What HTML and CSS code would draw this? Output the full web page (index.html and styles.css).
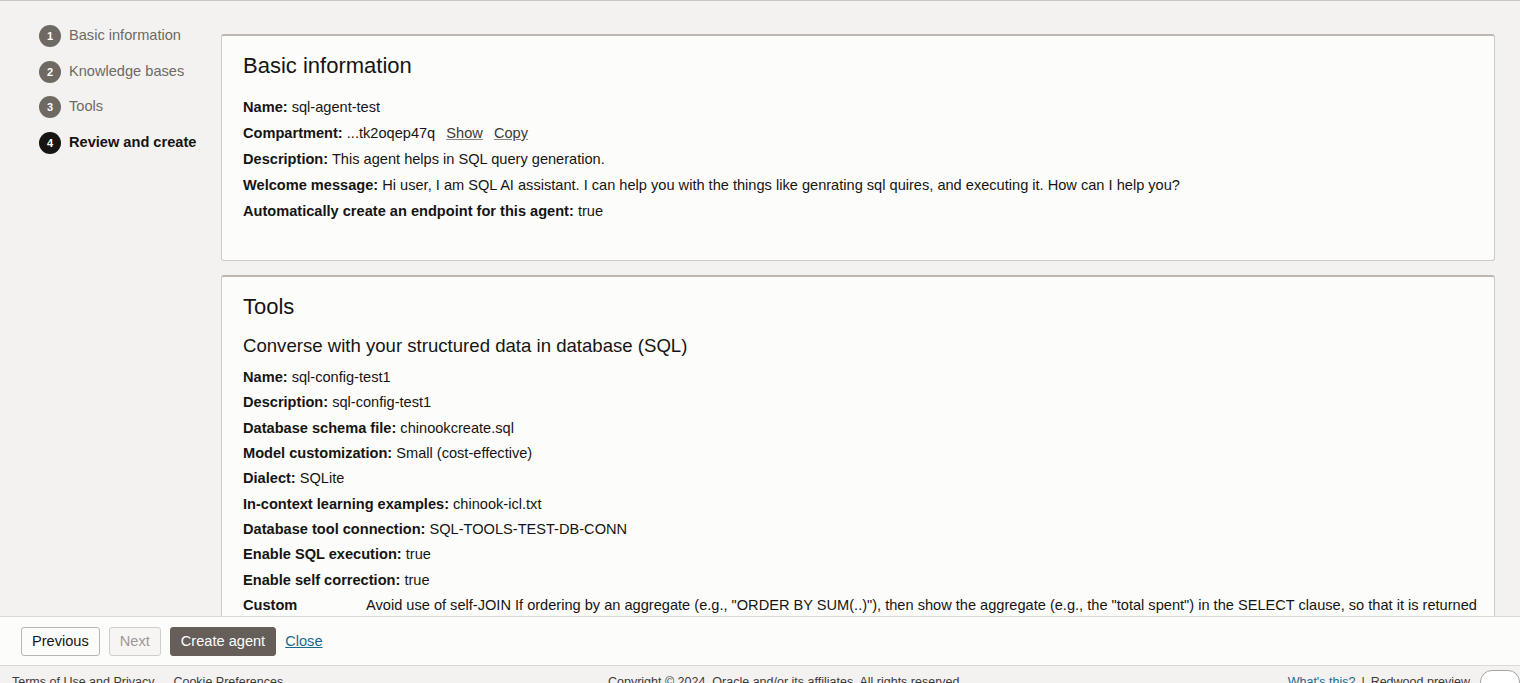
FILE: index.html
```html
<!DOCTYPE html>
<html lang="en">
<head>
<meta charset="utf-8">
<title>Review and create</title>
<link rel="stylesheet" href="styles.css">
</head>
<body>
<div class="page">
  <div class="main">
    <nav class="steps">
      <div class="step"><span class="num">1</span><span class="label">Basic information</span></div>
      <div class="step"><span class="num">2</span><span class="label">Knowledge bases</span></div>
      <div class="step"><span class="num">3</span><span class="label">Tools</span></div>
      <div class="step active"><span class="num">4</span><span class="label">Review and create</span></div>
    </nav>
    <div class="content">
      <section class="card card-basic">
        <h2 class="card-title">Basic information</h2>
        <div class="kv"><b>Name:</b> sql-agent-test</div>
        <div class="kv"><b>Compartment:</b> ...tk2oqep47q <a class="ulink" href="#">Show</a> <a class="ulink" href="#">Copy</a></div>
        <div class="kv"><b>Description:</b> This agent helps in SQL query generation.</div>
        <div class="kv"><b>Welcome message:</b> Hi user, I am SQL AI assistant. I can help you with the things like genrating sql quires, and executing it. How can I help you?</div>
        <div class="kv"><b>Automatically create an endpoint for this agent:</b> true</div>
      </section>
      <section class="card card-tools">
        <h2 class="card-title">Tools</h2>
        <h3 class="sub-title">Converse with your structured data in database (SQL)</h3>
        <div class="kv"><b>Name:</b> sql-config-test1</div>
        <div class="kv"><b>Description:</b> sql-config-test1</div>
        <div class="kv"><b>Database schema file:</b> chinookcreate.sql</div>
        <div class="kv"><b>Model customization:</b> Small (cost-effective)</div>
        <div class="kv"><b>Dialect:</b> SQLite</div>
        <div class="kv"><b>In-context learning examples:</b> chinook-icl.txt</div>
        <div class="kv"><b>Database tool connection:</b> SQL-TOOLS-TEST-DB-CONN</div>
        <div class="kv"><b>Enable SQL execution:</b> true</div>
        <div class="kv"><b>Enable self correction:</b> true</div>
        <div class="kv custom"><b>Custom</b><span>Avoid use of self-JOIN If ordering by an aggregate (e.g., "ORDER BY SUM(..)"), then show the aggregate (e.g., the "total spent") in the SELECT clause, so that it is returned in the result set and can be verified by the user.</span></div>
      </section>
    </div>
  </div>
  <div class="actions">
    <button class="btn">Previous</button>
    <button class="btn disabled">Next</button>
    <button class="btn primary">Create agent</button>
    <a class="close" href="#">Close</a>
  </div>
  <footer class="footer">
    <div class="f-left"><a href="#">Terms of Use and Privacy</a><a href="#">Cookie Preferences</a></div>
    <div class="f-center">Copyright © 2024, Oracle and/or its affiliates. All rights reserved.</div>
    <div class="f-right"><a class="blue" href="#">What's this?</a><span class="sep">|</span><span>Redwood preview</span><span class="toggle"></span></div>
  </footer>
</div>
</body>
</html>
```

FILE: styles.css
```css
* { box-sizing: border-box; }
html, body { margin: 0; padding: 0; }
body {
  font-family: "Liberation Sans", Arial, sans-serif;
  color: #161513;
  background: #f3f2f1;
  overflow: hidden;
}
.page {
  width: 1520px;
  height: 683px;
  display: flex;
  flex-direction: column;
  border-top: 1px solid #c9c5c1;
  overflow: hidden;
}
.main {
  height: 615px;
  flex: none;
  display: flex;
  overflow: hidden;
}
.steps {
  width: 221px;
  flex: none;
  padding: 24px 0 0 39px;
}
.step {
  display: flex;
  align-items: center;
  height: 22px;
  margin-bottom: 13.7px;
}
.num {
  width: 22px;
  height: 22px;
  border-radius: 50%;
  background: #6f6964;
  color: #fff;
  font-size: 11px;
  font-weight: bold;
  display: flex;
  align-items: center;
  justify-content: center;
  flex: none;
}
.label {
  margin-left: 8px;
  font-size: 14.6px;
  color: #6f6964;
  position: relative;
  top: -1px;
}
.step.active .num { background: #161513; }
.step.active .label { color: #161513; font-weight: bold; }

.content {
  flex: 1;
  padding: 33px 25px 0 0;
  display: flex;
  flex-direction: column;
  gap: 14px;
}
.card {
  background: #fcfcfb;
  border: 1px solid #cdc9c5;
  border-top: 2px solid #bdb7b2;
  border-radius: 3px;
  padding: 15px 21px 0 21px;
  flex: none;
}
.card-basic { height: 227px; }
.card-tools { height: 400px; }
.card-title {
  margin: 0;
  font-size: 22px;
  font-weight: normal;
  line-height: 29px;
}
.sub-title {
  margin: 13px 0 7px;
  font-size: 18.6px;
  font-weight: normal;
  line-height: 24px;
}
.kv {
  font-size: 14.6px;
  line-height: 25.33px;
}
.card-basic .card-title { margin-bottom: 14px; }
.card-basic .kv { line-height: 26px; }
.kv b { font-weight: bold; }
.ulink {
  color: #3c3a37;
  text-decoration: underline;
  text-decoration-color: #8a847f;
  margin-left: 7px;
}
.kv.custom {
  display: grid;
  grid-template-columns: 123px 1fr;
  margin-right: -18px;
}

.actions {
  height: 50px;
  flex: none;
  background: #fcfcfb;
  border-top: 1px solid #dcd8d4;
  border-bottom: 1px solid #dcd8d4;
  display: flex;
  align-items: center;
  padding: 0 0 0 21px;
  gap: 9px;
}
.btn {
  font-family: "Liberation Sans", Arial, sans-serif;
  font-size: 14.6px;
  height: 29px;
  padding: 0 10px;
  background: #fcfcfb;
  border: 1px solid #bcb6b1;
  border-radius: 3px;
  color: #161513;
}
.btn.disabled {
  color: #9e9892;
  border-color: #d2cdc9;
  background: #f6f5f4;
}
.btn.primary {
  background: #665e59;
  border-color: #665e59;
  color: #fff;
}
.close {
  font-size: 14.6px;
  color: #1b6a8c;
  text-decoration: underline;
}

.footer {
  flex: 1;
  display: flex;
  font-size: 12.5px;
  color: #3c3a37;
  padding: 9px 0 0 12px;
  line-height: 14px;
}
.footer a { color: #3c3a37; text-decoration: none; }
.f-left { display: flex; gap: 19px; }
.f-center { flex: 1; text-align: center; }
.f-right { display: flex; align-items: flex-start; }
.f-right .blue { color: #1b6a8c; }
.sep { margin: 0 6px; }
.toggle {
  margin-left: 10px;
  margin-top: -5px;
  width: 40px;
  height: 24px;
  border-radius: 12px;
  border: 1px solid #a9a39e;
  background: #fff;
  flex: none;
}
```
